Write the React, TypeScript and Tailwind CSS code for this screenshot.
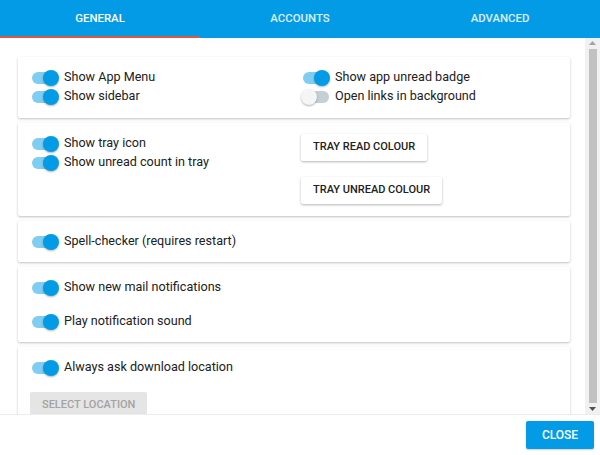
import React from "react";

const Toggle: React.FC<{ on?: boolean }> = ({ on = true }) => (
  <div className="relative w-[28px] h-[16px] shrink-0 flex items-center">
    <div
      className={`w-[26px] h-[12px] rounded-full ml-[1px] ${on ? "bg-[#80cdf2]" : "bg-[#c5cfd6]"}`}
    />
    <div
      className={`absolute top-0 w-[16px] h-[16px] rounded-full shadow-[0_1px_2px_rgba(0,0,0,0.3)] ${
        on ? "right-0 bg-[#039be5]" : "left-[-1px] bg-[#f5f5f5]"
      }`}
    />
  </div>
);

const Row: React.FC<{ label: string; on?: boolean }> = ({ label, on }) => (
  <div className="flex items-center h-[19px] gap-[5px]">
    <Toggle on={on} />
    <span className="text-[12.6px] text-[#212121]">{label}</span>
  </div>
);

const Card: React.FC<{ children: React.ReactNode; className?: string }> = ({ children, className = "" }) => (
  <div
    className={`bg-white rounded-[2px] shadow-[0_1px_3px_rgba(0,0,0,0.16),0_1px_2px_rgba(0,0,0,0.1)] mb-[5px] pl-[13px] pr-[13px] pt-[11px] ${className}`}
  >
    {children}
  </div>
);

const FlatButton: React.FC<{ label: string }> = ({ label }) => (
  <button className="h-[27px] px-[12px] bg-white rounded-[2px] shadow-[0_1px_3px_rgba(0,0,0,0.18),0_1px_2px_rgba(0,0,0,0.12)] text-[11px] font-medium text-[#212121]">
    {label}
  </button>
);

export default function App() {
  return (
    <div className="w-[600px] h-[455px] bg-white flex flex-col font-['Roboto',sans-serif] overflow-hidden">
      <div className="h-[38px] bg-[#039be5] flex relative shrink-0">
        {["GENERAL", "ACCOUNTS", "ADVANCED"].map((t, i) => (
          <div
            key={t}
            className={`w-[200px] flex items-center justify-center text-[11.4px] font-medium pb-[1px] ${
              i === 0 ? "text-white" : "text-white/85"
            }`}
          >
            {t}
          </div>
        ))}
        <div className="absolute left-0 bottom-0 w-[200px] h-[2px] bg-[#e0573f]" />
      </div>

      <div className="flex flex-1 min-h-0 border-b border-[#ececec]">
        <div className="flex-1 overflow-hidden pl-[18px] pr-[15px] pt-[19px]">
          <Card className="pb-[12px]">
            <div className="flex">
              <div className="w-[271px]">
                <Row label="Show App Menu" />
                <Row label="Show sidebar" />
              </div>
              <div>
                <Row label="Show app unread badge" />
                <Row label="Open links in background" on={false} />
              </div>
            </div>
          </Card>

          <Card className="pb-[12px]">
            <div className="flex">
              <div className="w-[270px]">
                <Row label="Show tray icon" />
                <Row label="Show unread count in tray" />
              </div>
              <div className="flex flex-col items-start gap-[16px]">
                <FlatButton label="TRAY READ COLOUR" />
                <FlatButton label="TRAY UNREAD COLOUR" />
              </div>
            </div>
          </Card>

          <Card className="pb-[11px]">
            <Row label="Spell-checker (requires restart)" />
          </Card>

          <Card className="pb-[11px]">
            <div className="flex flex-col gap-[15px]">
              <Row label="Show new mail notifications" />
              <Row label="Play notification sound" />
            </div>
          </Card>

          <Card className="pb-[12px]">
            <Row label="Always ask download location" />
            <button className="mt-[15px] -ml-[1px] h-[27px] px-[12px] bg-[#e5e5e5] rounded-[2px] text-[11px] font-medium text-[#a3a3a3]">
              SELECT LOCATION
            </button>
          </Card>
        </div>

        <div className="w-[15px] bg-[#f1f1f1] flex flex-col items-center shrink-0">
          <div className="h-[10px] flex items-center justify-center">
            <svg width="7" height="4" viewBox="0 0 7 4">
              <path d="M3.5 0L7 4H0z" fill="#a3a3a3" />
            </svg>
          </div>
          <div className="flex-1 w-[8px] bg-[#c1c1c1] my-[1px]" />
          <div className="h-[10px] flex items-center justify-center">
            <svg width="7" height="4" viewBox="0 0 7 4">
              <path d="M0 0H7L3.5 4z" fill="#505050" />
            </svg>
          </div>
        </div>
      </div>

      <div className="h-[40px] flex items-center justify-end pr-[6px] shrink-0">
        <button className="h-[28px] w-[68px] bg-[#039be5] rounded-[2px] text-white text-[12px] font-medium shadow-[0_1px_2px_rgba(0,0,0,0.2)]">
          CLOSE
        </button>
      </div>
    </div>
  );
}
